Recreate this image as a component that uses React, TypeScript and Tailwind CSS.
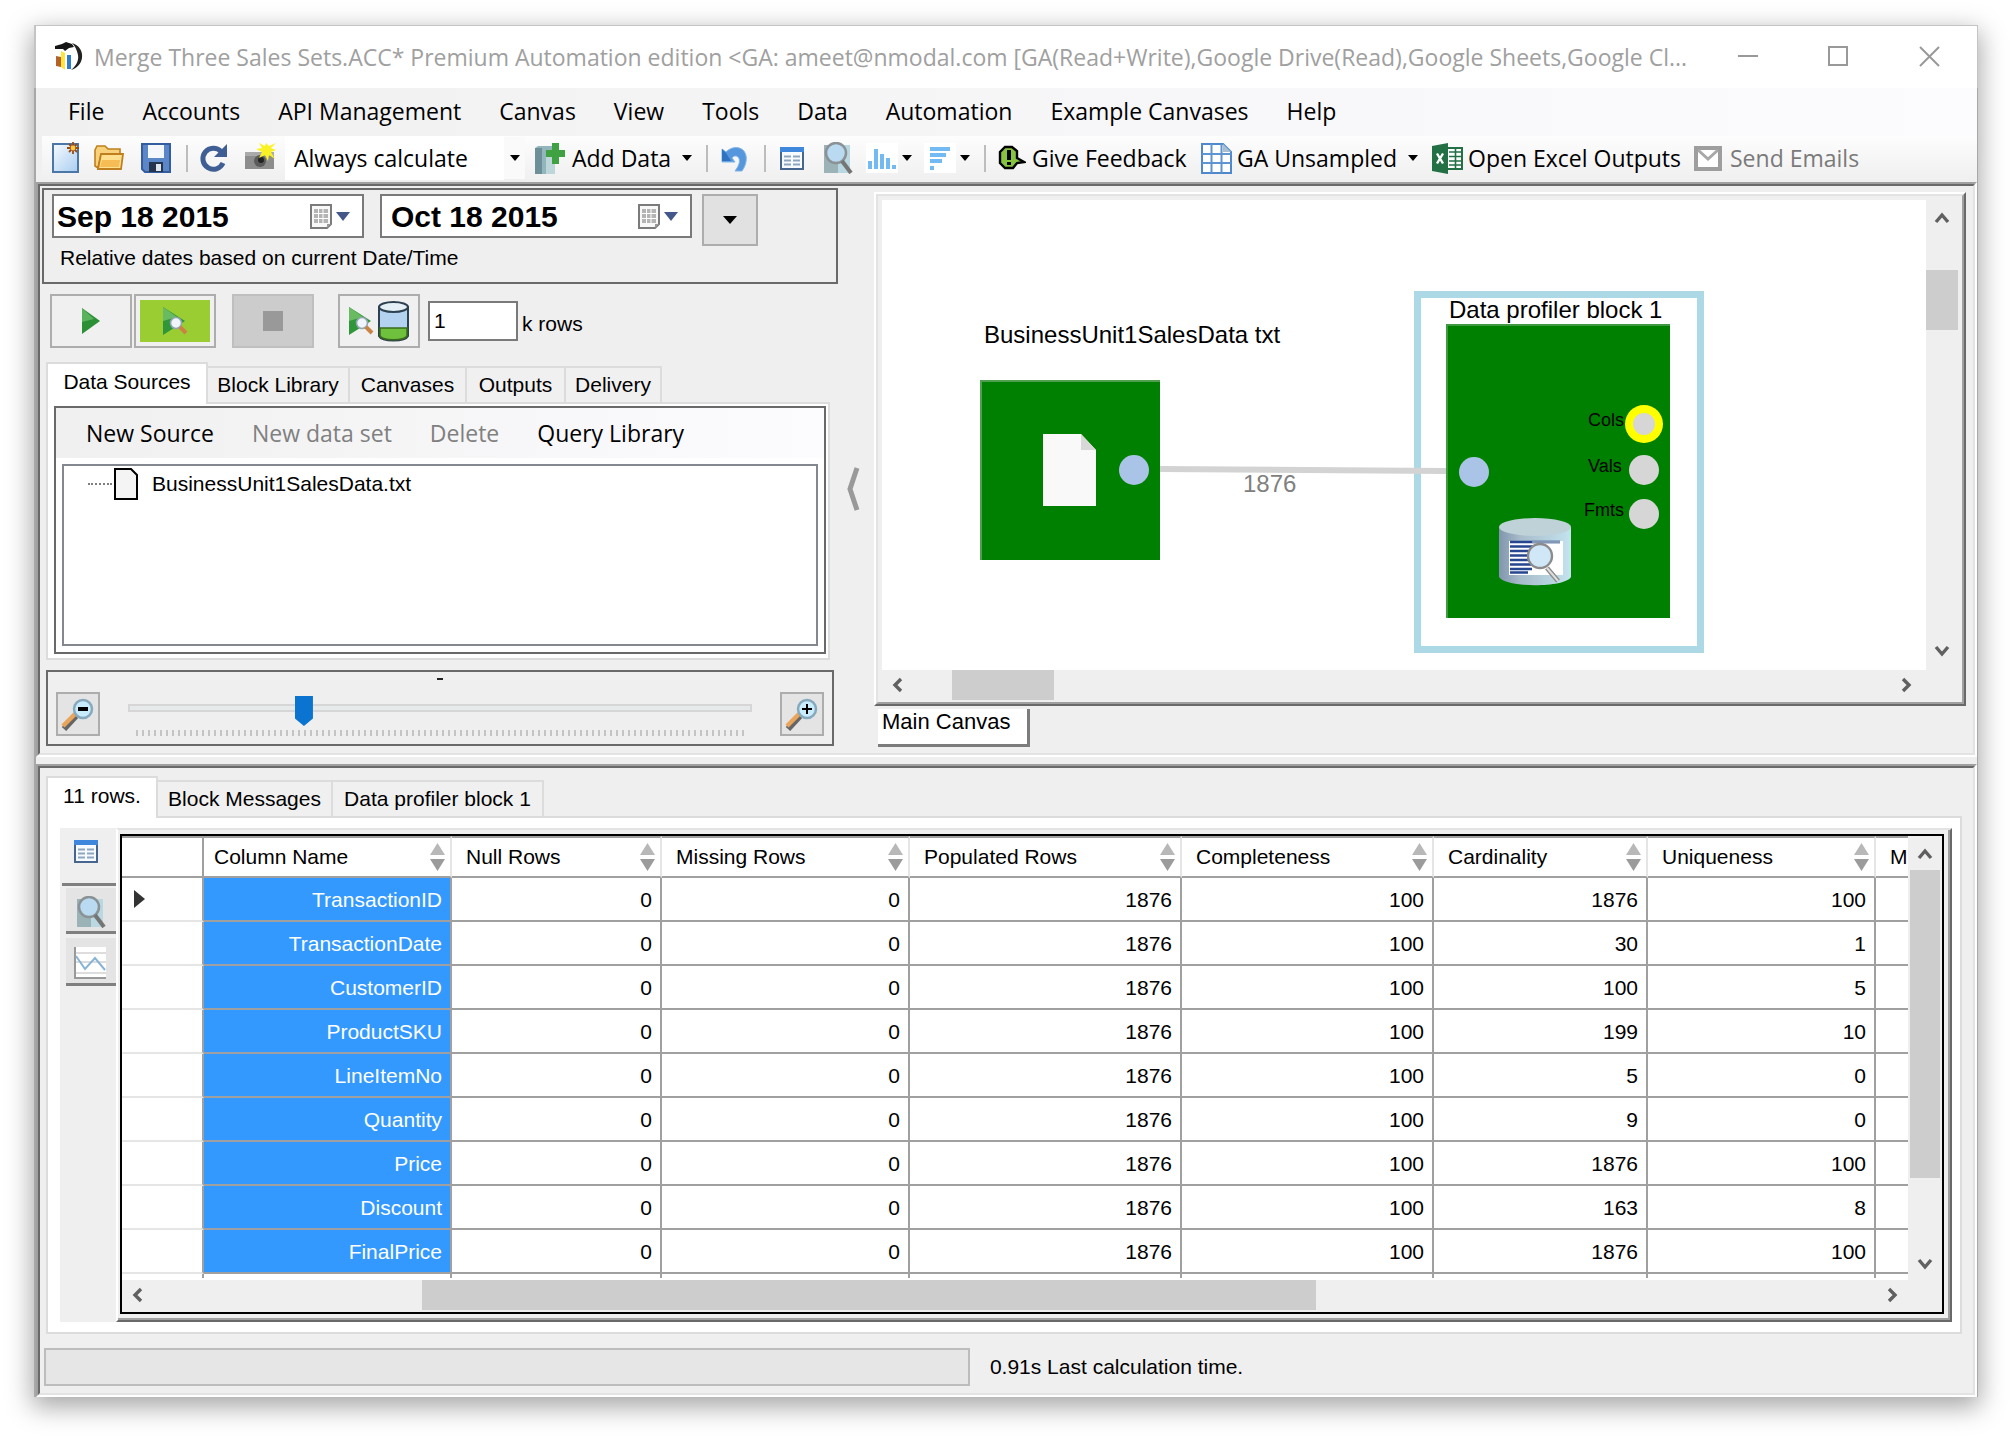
import React, { useState } from 'react';

const menuItems = ['File', 'Accounts', 'API Management', 'Canvas', 'View', 'Tools', 'Data', 'Automation', 'Example Canvases', 'Help'];

const columns = [
  { name: 'Null Rows', width: 'w-[210px]' },
  { name: 'Missing Rows', width: 'w-[248px]' },
  { name: 'Populated Rows', width: 'w-[272px]' },
  { name: 'Completeness', width: 'w-[252px]' },
  { name: 'Cardinality', width: 'w-[214px]' },
  { name: 'Uniqueness', width: 'w-[228px]' },
];

const rows = [
  ['TransactionID', 0, 0, 1876, 100, 1876, 100],
  ['TransactionDate', 0, 0, 1876, 100, 30, 1],
  ['CustomerID', 0, 0, 1876, 100, 100, 5],
  ['ProductSKU', 0, 0, 1876, 100, 199, 10],
  ['LineItemNo', 0, 0, 1876, 100, 5, 0],
  ['Quantity', 0, 0, 1876, 100, 9, 0],
  ['Price', 0, 0, 1876, 100, 1876, 100],
  ['Discount', 0, 0, 1876, 100, 163, 8],
  ['FinalPrice', 0, 0, 1876, 100, 1876, 100],
];

const Caret = ({ className = '', fill = '#000' }) => (
  <svg className={`shrink-0 ${className}`} width="10" height="6" viewBox="0 0 10 6">
    <path d="M0 0h10L5 6z" fill={fill} />
  </svg>
);

const Separator = ({ className = '' }) => <div className={`h-[27px] w-[2px] shrink-0 bg-[#bdbdbd] ${className}`} />;

const Chevron = ({ d }) => (
  <svg width="16" height="16" viewBox="0 0 16 16" fill="none" stroke="#606060" strokeWidth="3.4">
    <path d={d} />
  </svg>
);
const UP = 'M2 12L8 5l6 7';
const DOWN = 'M2 4l6 7 6-7';
const LEFT = 'M11 2L5 8l6 6';
const RIGHT = 'M5 2l6 6-6 6';

const LogoIcon = () => (
  <svg width="32" height="30" viewBox="0 0 32 30">
    <path d="M2 4l7-2 4-2 6 2 2 3-5 1-4 3-2-2-8 0z" fill="#151515" />
    <path d="M19 1c7 2 11 8 10 15-1 6-5 10-11 12 5-4 8-9 7-15-1-5-3-9-6-12z" fill="#222" />
    <path d="M3 14l5 1v10l-5-1z" fill="#b5622a" />
    <path d="M8 9l4 2v17l-4-3z" fill="#ffe53b" />
    <path d="M14 13h4v14h-4z" fill="#2e7bc8" />
    <path d="M12 11h2v18h-2z" fill="#fff" />
  </svg>
);

const NewIcon = () => (
  <svg width="28" height="32" viewBox="0 0 28 32">
    <defs>
      <linearGradient id="newPage" x1="0" y1="0" x2="1" y2="1">
        <stop offset="0" stopColor="#f6fbff" />
        <stop offset="1" stopColor="#a9cdf0" />
      </linearGradient>
    </defs>
    <path d="M1 2h25v28H1z" fill="url(#newPage)" stroke="#4a76a8" strokeWidth="2" />
    <path d="M21 0v12M15 6h12M17 2l8 8M25 2l-8 8" stroke="#9a4a12" strokeWidth="1.8" />
    <circle cx="21" cy="6" r="2.4" fill="#ffc93d" />
  </svg>
);

const FolderIcon = () => (
  <svg width="32" height="28" viewBox="0 0 32 28">
    <path d="M2 6l2-4h8l3 3h12v6H8L5 24 2 22z" fill="#f8d27a" stroke="#bf7f1f" strokeWidth="1.6" />
    <path d="M8 10h22l-2 15H5z" fill="#ffe08f" stroke="#bf7f1f" strokeWidth="1.8" />
    <path d="M9 16h18l-1 7H7z" fill="#f6bd55" />
  </svg>
);

const SaveIcon = () => (
  <svg width="30" height="30" viewBox="0 0 30 30">
    <path d="M1 1h28v28H4l-3-3z" fill="#5b87c8" stroke="#345da0" strokeWidth="2" />
    <path d="M7 2h16v13H7z" fill="#f4f8fd" />
    <path d="M8 19h14v10H8z" fill="#26344d" />
    <path d="M15 21h5v7h-5z" fill="#dfe6ee" />
  </svg>
);

const RefreshIcon = () => (
  <svg width="30" height="30" viewBox="0 0 30 30">
    <path d="M23 8.500A10.500 10.500 0 1 0 25 20" fill="none" stroke="#3f5f94" strokeWidth="5" />
    <path d="M29 1v13H16z" fill="#3f5f94" />
  </svg>
);

const CameraIcon = () => (
  <svg width="31" height="30" viewBox="0 0 31 30">
    <path d="M0 9h29v17H0z" fill="#8d8d8d" />
    <path d="M0 9h29v4H0z" fill="#aaa" />
    <circle cx="15" cy="18" r="6" fill="#5b5b5b" />
    <circle cx="16" cy="17" r="3" fill="#222" />
    <path d="M31 0l-5 5 5 2-5 2 4 7-6-4-1 6-3-6-6 3 3-6-6-3 6-1-3-5 6 3 1-3 3 3z" fill="#fbf225" />
  </svg>
);

const AddDataIcon = () => (
  <svg width="30" height="31" viewBox="0 0 30 31">
    <path d="M0 5l3-2h17v28H0z" fill="#93b6bd" />
    <path d="M0 5h7v26H0z" fill="#6d8f98" />
    <path d="M11 7h9v24h-9z" fill="#bcd6da" />
    <path d="M17 0h7v7h6v7h-6v7h-7v-7h-6V7h6z" fill="#3fa142" />
  </svg>
);

const UndoIcon = () => (
  <svg width="27" height="28" viewBox="0 0 27 28">
    <path d="M1 5l4 3c5-5 12-6 17-2 5 5 4 14-1 21h-7c4-5 6-11 3-14-2-2-5-1-6 1l3 4H1z" fill="#5596dc" stroke="#7fb4e8" strokeWidth="1" />
    <path d="M1 5l4 4 5 8H1z" fill="#2f72c0" />
  </svg>
);

const GridIcon = () => (
  <svg width="24" height="23" viewBox="0 0 24 23">
    <path d="M1 1h22v21H1z" fill="#f7fbff" stroke="#46658f" strokeWidth="2" />
    <path d="M0 0h24v5H0z" fill="#3f86dd" />
    <path d="M4 9.500h7M13 9.500h7M4 13.500h7M13 13.500h7M4 17.500h7M13 17.500h7" stroke="#8fa6c2" strokeWidth="2" />
  </svg>
);

const SearchDataIcon = () => (
  <svg width="30" height="32" viewBox="0 0 30 32">
    <path d="M1 3h26v28H1z" fill="#9bb2b6" />
    <path d="M15 3h12v28H15z" fill="#b9d8e2" />
    <circle cx="13" cy="11" r="10" fill="#b9daf0" stroke="#8a9296" strokeWidth="2.500" />
    <path d="M19 19l9 12" stroke="#757575" strokeWidth="4" />
  </svg>
);

const BarsIcon = () => (
  <svg width="32" height="30" viewBox="0 0 32 30" className="bg-white">
    <path d="M4 26v-8M10 26V6M16 26V11M22 26V15M28 26v-4" stroke="#74baf2" strokeWidth="4" />
  </svg>
);

const HBarsIcon = () => (
  <svg width="32" height="30" viewBox="0 0 32 30" className="bg-white">
    <path d="M6 6h20M6 12h16M6 18h12M6 25h4" stroke="#74baf2" strokeWidth="4" />
  </svg>
);

const FeedbackIcon = () => (
  <svg width="28" height="26" viewBox="0 0 28 26">
    <path d="M7 2h7l5 4v7l7 4-7 1-4 5H7l-5-5V7z" fill="#86c440" stroke="#000" strokeWidth="2.400" />
    <path d="M9 5h4v10H9zM9 17h4v3H9z" fill="#000" />
  </svg>
);

const SheetIcon = () => (
  <svg width="31" height="31" viewBox="0 0 31 31">
    <path d="M1 1h21l8 8v21H1z" fill="#fff" stroke="#4f88cc" strokeWidth="2" />
    <path d="M1 11h29M1 20h29M10.500 1v29M20.500 1v29" stroke="#5f94d2" strokeWidth="2" />
    <path d="M22 1l8 8h-8z" fill="#a9bfd0" />
  </svg>
);

const ExcelIcon = () => (
  <svg width="31" height="31" viewBox="0 0 31 31">
    <path d="M15 5h15v21H15z" fill="#fff" stroke="#237044" strokeWidth="2" />
    <path d="M17 9h12M17 13.500h12M17 18h12M17 22h12M23.500 5v21" stroke="#237044" strokeWidth="1.600" />
    <path d="M0 3l16-3v31L0 28z" fill="#237044" />
    <path d="M5 10.500l6 10M11 10.500l-6 10" stroke="#fff" strokeWidth="2.400" />
  </svg>
);

const MailIcon = () => (
  <svg width="28" height="25" viewBox="0 0 28 25">
    <path d="M2 2h24v21H2z" fill="#fff" stroke="#9e9e9e" strokeWidth="4" />
    <path d="M4 4l10 9L24 4" fill="none" stroke="#a8a8a8" strokeWidth="3" />
  </svg>
);

const CalendarIcon = () => (
  <svg width="22" height="25" viewBox="0 0 22 25">
    <path d="M1 1h20v19l-4 4H1z" fill="#f8f8f8" stroke="#7b7b7b" strokeWidth="2" />
    <path d="M4 5h14v14H4z" fill="#b4b4b4" />
    <path d="M4 9.500h14M4 14.500h14M8.500 5v14M13 5v14" stroke="#fff" strokeWidth="1" />
    <path d="M17 24v-4h4z" fill="#999" />
  </svg>
);

const PlayIcon = () => (
  <svg width="18" height="28" viewBox="0 0 18 28">
    <path d="M0 1l18 13L0 27z" fill="#2a8f35" />
    <path d="M0 1l12 11-12 3z" fill="#58b35c" />
  </svg>
);

const PlayProfileIcon = () => (
  <svg width="25" height="28" viewBox="0 0 25 28">
    <path d="M0 0l22 14L0 28z" fill="#2f9639" />
    <path d="M0 0l14 10L0 14z" fill="#69bb62" />
    <circle cx="13" cy="16" r="5.500" fill="#eef5fb" stroke="#92a4ae" strokeWidth="1.600" />
    <path d="M17 20l6 6" stroke="#c98445" strokeWidth="4" />
  </svg>
);

const CylinderIcon = () => (
  <svg width="31" height="41" viewBox="0 0 31 41">
    <path d="M1 6v29c3 6 26 6 29 0V6z" fill="#b3d2ef" stroke="#2d4150" strokeWidth="2" />
    <path d="M2 27h27v8c-3 5-24 5-27 0z" fill="#6fc03c" stroke="#3a6b1d" strokeWidth="1.500" />
    <ellipse cx="15.500" cy="6" rx="14.500" ry="5" fill="#e4f0f5" stroke="#2d4150" strokeWidth="2" />
  </svg>
);

const ZoomGlyph = ({ plus = false }) => (
  <svg width="34" height="34" viewBox="0 0 34 34">
    <path d="M3 32l12-13" stroke="#666" strokeWidth="6" />
    <path d="M2 29l12-12" stroke="#e9a55b" strokeWidth="4.500" />
    <circle cx="22" cy="12" r="9" fill="#c8ecfb" stroke="#86a9bd" strokeWidth="2.500" />
    <path d={plus ? 'M17 12h10M22 7v10' : 'M17 12h10'} stroke="#000" strokeWidth={plus ? 2 : 4} />
  </svg>
);

const DatabaseIcon = () => (
  <svg width="72" height="68" viewBox="0 0 72 68">
    <defs>
      <linearGradient id="drum">
        <stop offset="0" stopColor="#8196ad" />
        <stop offset="0.300" stopColor="#a8bccb" />
        <stop offset="1" stopColor="#c3e3ee" />
      </linearGradient>
    </defs>
    <path d="M0 9v50c6 11 66 11 72 0V9z" fill="url(#drum)" />
    <ellipse cx="36" cy="9" rx="36" ry="9" fill="#bfd2d8" />
    <path d="M10 23h54v34H10z" fill="#fff" />
    <path d="M11 24h50M11 28.500h34M11 33h30M11 37.500h28M11 42h28M11 46.500h26M11 51h22M11 54.500h18" stroke="#26468f" strokeWidth="2.400" />
    <path d="M33 24h28" stroke="#8296b6" strokeWidth="2.400" />
    <circle cx="41" cy="38" r="12" fill="#cfe7f7" stroke="#8b8b8b" strokeWidth="2.400" />
    <path d="M48 50l11 13" stroke="#8b8b8b" strokeWidth="5" />
    <path d="M48 50l11 13" stroke="#ddd" strokeWidth="2" />
  </svg>
);

const ChartIcon = () => (
  <svg width="32" height="32" viewBox="0 0 32 32">
    <path d="M0 0h32v32H0z" fill="#fff" />
    <path d="M1 6h31M1 15h31M1 26h31" stroke="#ddd" strokeWidth="2" />
    <path d="M1 0v31h31" fill="none" stroke="#999" strokeWidth="2" />
    <path d="M2 9l9 13 10-11 10 12" fill="none" stroke="#86b3d6" strokeWidth="2" />
  </svg>
);

const SortIcon = () => (
  <svg width="15" height="28" viewBox="0 0 15 28">
    <path d="M7.500 0L15 12H0z" fill="#b8b8b8" />
    <path d="M0 16h15L7.500 28z" fill="#9b9b9b" />
  </svg>
);

const TitleBar = () => (
  <header className="flex h-[63px] items-center border-t border-l-2 border-r border-[#c4c4c4] bg-white pl-[17px]">
    <LogoIcon />
    <h1 className="ml-[9px] min-w-0 flex-1 truncate text-[23px] text-[#a0a0a0]">
      Merge Three Sales Sets.ACC* Premium Automation edition &lt;GA: ameet@nmodal.com [GA(Read+Write),Google Drive(Read),Google Sheets,Google Cl...
    </h1>
    <div className="flex h-full pr-[2px] pb-[2px]">
      <button aria-label="Minimize" className="flex w-[90px] items-center justify-center">
        <span className="h-[2px] w-5 bg-[#999]" />
      </button>
      <button aria-label="Maximize" className="flex w-[90px] items-center justify-center">
        <span className="size-5 border-2 border-[#999]" />
      </button>
      <button aria-label="Close" className="flex w-[92px] items-center justify-center">
        <svg width="21" height="21" viewBox="0 0 21 21" stroke="#999" strokeWidth="2">
          <path d="M1 1l19 19M20 1L1 20" />
        </svg>
      </button>
    </div>
  </header>
);

const Toolbar = () => (
  <div className="ml-[6px] flex h-[46px] items-center bg-gradient-to-b from-[#fdfdfd] to-[#efefef] pb-[2px] pl-[10px] text-[23px] whitespace-nowrap">
    <button aria-label="New"><NewIcon /></button>
    <button aria-label="Open" className="ml-[13px]"><FolderIcon /></button>
    <button aria-label="Save" className="ml-4"><SaveIcon /></button>
    <Separator className="ml-[15px]" />
    <button aria-label="Refresh" className="ml-[10px]"><RefreshIcon /></button>
    <button aria-label="Snapshot" className="ml-[17px]"><CameraIcon /></button>
    <select aria-label="Calculation mode" className="ml-[9px] h-11 w-[219px] shrink-0 appearance-none bg-white pl-[9px]">
      <option>Always calculate</option>
    </select>
    <span className="flex h-[42px] w-[21px] shrink-0 items-center justify-center bg-[#fafafa]"><Caret /></span>
    <button className="ml-[10px] flex items-center">
      <AddDataIcon />
      <span className="ml-[7px] w-[98px] text-left">Add Data</span>
      <Caret className="ml-3" />
    </button>
    <Separator className="ml-[14px]" />
    <button aria-label="Undo" className="ml-[13px]"><UndoIcon /></button>
    <Separator className="ml-4" />
    <button aria-label="Table view" className="ml-[14px]"><GridIcon /></button>
    <button aria-label="Inspect data" className="ml-[19px]"><SearchDataIcon /></button>
    <button aria-label="Column chart" className="ml-[13px] flex items-center gap-1"><BarsIcon /><Caret /></button>
    <button aria-label="Bar chart" className="ml-3 flex items-center gap-1"><HBarsIcon /><Caret /></button>
    <Separator className="ml-[14px]" />
    <button className="ml-3 flex items-center">
      <FeedbackIcon />
      <span className="ml-[6px] w-[152px] text-left">Give Feedback</span>
    </button>
    <button className="ml-[17px] flex items-center">
      <SheetIcon />
      <span className="ml-[5px] w-[159px] text-left">GA Unsampled</span>
      <Caret className="ml-3" />
    </button>
    <button className="ml-[14px] flex items-center">
      <ExcelIcon />
      <span className="ml-[5px] w-[208px] text-left">Open Excel Outputs</span>
    </button>
    <button className="ml-[18px] flex items-center text-[#7a7a7a]">
      <MailIcon />
      <span className="ml-2">Send Emails</span>
    </button>
  </div>
);

const DateField = ({ label, value, className }) => {
  const [date, setDate] = useState(value);
  return (
    <div className="flex h-11 w-[312px] items-center border-2 border-[#7a7a7a] bg-white pr-3">
      <input
        aria-label={label}
        value={date}
        onChange={(e) => setDate(e.target.value)}
        className={`min-w-0 flex-1 bg-transparent text-[30px] font-bold outline-none ${className}`}
      />
      <button aria-label={`Pick ${label}`} className="flex items-center gap-1">
        <CalendarIcon />
        <svg width="14" height="9" viewBox="0 0 14 9"><path d="M0 0h14L7 9z" fill="#43578a" /></svg>
      </button>
    </div>
  );
};

const DateRange = () => (
  <div className="h-24 border-2 border-[#696969] pt-1 pl-2">
    <div className="flex items-start">
      <DateField label="start date" value="Sep 18 2015" className="pl-[3px]" />
      <div className="w-4" />
      <DateField label="end date" value="Oct 18 2015" className="pl-[9px]" />
      <button aria-label="Date presets" className="ml-[10px] flex h-[52px] w-14 items-center justify-center border-2 border-[#adadad] bg-[#e1e1e1]">
        <svg width="14" height="8" viewBox="0 0 14 8"><path d="M0 0h14L7 8z" /></svg>
      </button>
    </div>
    <p className="pl-2 leading-6">Relative dates based on current Date/Time</p>
  </div>
);

const RunControls = () => {
  const [limit, setLimit] = useState('1');
  return (
    <div className="mt-[10px] flex items-center pl-2">
      <button aria-label="Run" className="flex h-[54px] w-[82px] items-center justify-center border-2 border-[#adadad] bg-[#f0f0f0]"><PlayIcon /></button>
      <button aria-label="Run and profile" className="ml-[2px] flex h-[54px] w-[82px] items-center justify-center border-2 border-[#adadad] bg-[#f0f0f0] p-1">
        <span className="flex h-[42px] w-full items-center justify-center bg-[#9acd32]"><PlayProfileIcon /></span>
      </button>
      <button aria-label="Stop" className="ml-4 flex h-[54px] w-[82px] items-center justify-center border-2 border-[#bfbfbf] bg-[#ccc]">
        <span className="size-5 bg-[#999]" />
      </button>
      <button aria-label="Profile sample" className="ml-6 flex h-[54px] w-[82px] items-center justify-center gap-1 border-2 border-[#adadad] bg-[#f0f0f0]">
        <PlayProfileIcon />
        <CylinderIcon />
      </button>
      <input
        id="row-limit"
        value={limit}
        onChange={(e) => setLimit(e.target.value)}
        className="ml-2 h-10 w-[90px] border-2 border-[#7a7a7a] bg-white pl-1 outline-none"
      />
      <label htmlFor="row-limit" className="ml-1 pt-[6px]">k rows</label>
    </div>
  );
};

const Tab = ({ active = false, className = '', children }) => (
  <button
    role="tab"
    aria-selected={active}
    className={
      active
        ? `relative -mb-[2px] h-[42px] border-2 border-b-0 border-[#dcdcdc] bg-white pb-1 text-center whitespace-nowrap ${className}`
        : `h-9 border-t-2 border-r-2 border-[#dcdcdc] bg-[#f0f0f0] text-center whitespace-nowrap ${className}`
    }
  >
    {children}
  </button>
);

const SourcesPanel = () => (
  <div className="mt-[14px] ml-1 w-[784px]">
    <div role="tablist" className="flex h-10 items-end">
      <Tab active className="w-[162px]">Data Sources</Tab>
      <Tab className="w-[142px]">Block Library</Tab>
      <Tab className="w-[117px]">Canvases</Tab>
      <Tab className="w-[99px]">Outputs</Tab>
      <Tab className="w-[96px]">Delivery</Tab>
    </div>
    <div className="border-2 border-[#dcdcdc] bg-white pt-[2px] pr-[2px] pb-1 pl-[6px]">
      <div className="border-2 border-[#696969]">
        <div className="flex h-[50px] items-center gap-[38px] bg-gradient-to-r from-[#f0f0f0] to-[#fcfcff] pl-[30px] font-['Open_Sans',sans-serif] text-[23px]">
          <button>New Source</button>
          <button className="text-[#808080]">New data set</button>
          <button className="text-[#808080]">Delete</button>
          <button>Query Library</button>
        </div>
        <div className="mx-[6px] mt-[6px] mb-[6px] h-[182px] border-2 border-[#828790] bg-white">
          <div className="flex h-9 items-center pl-6">
            <span className="w-[24px] border-t-2 border-dotted border-[#808080]" />
            <svg className="ml-[2px]" width="24" height="32" viewBox="0 0 24 32">
              <path d="M1 1h16l6 6v24H1z" fill="#f4f4f4" stroke="#000" strokeWidth="2" />
            </svg>
            <span className="ml-[14px]">BusinessUnit1SalesData.txt</span>
          </div>
        </div>
      </div>
    </div>
  </div>
);

const ZoomPanel = () => {
  const [zoom, setZoom] = useState(274);
  return (
    <div className="mt-[10px] ml-1 flex h-[76px] w-[788px] border-2 border-[#696969] px-2">
      <button aria-label="Zoom out" onClick={() => setZoom(zoom - 50)} className="mt-5 flex h-11 w-11 items-center justify-center border-2 border-[#adadad] bg-[#e4e4e4]">
        <ZoomGlyph />
      </button>
      <div className="flex flex-1 flex-col px-7">
        <div className="mt-[6px] h-[2px] w-[6px] self-center bg-[#222]" />
        <input
          type="range"
          aria-label="Zoom"
          min="0"
          max="1000"
          value={zoom}
          onChange={(e) => setZoom(Number(e.target.value))}
          className="mt-[13px] h-[30px] w-full appearance-none bg-transparent [&::-webkit-slider-runnable-track]:h-2 [&::-webkit-slider-runnable-track]:border-2 [&::-webkit-slider-runnable-track]:border-[#d6d6d6] [&::-webkit-slider-runnable-track]:bg-[#e7eaea] [&::-webkit-slider-thumb]:-mt-[10px] [&::-webkit-slider-thumb]:h-[30px] [&::-webkit-slider-thumb]:w-[18px] [&::-webkit-slider-thumb]:appearance-none [&::-webkit-slider-thumb]:bg-[#0b74d1] [&::-webkit-slider-thumb]:[clip-path:polygon(0_0,100%_0,100%_75%,50%_100%,0_75%)]"
        />
        <div className="mx-2 mt-[7px] h-[6px] bg-[repeating-linear-gradient(90deg,#c4c4c4_0_2px,transparent_2px_6px)]" />
      </div>
      <button aria-label="Zoom in" onClick={() => setZoom(zoom + 50)} className="mt-5 flex h-11 w-11 items-center justify-center border-2 border-[#adadad] bg-[#e4e4e4]">
        <ZoomGlyph plus />
      </button>
    </div>
  );
};

const Canvas = () => (
  <div className="relative h-[470px] min-w-0 flex-1 overflow-hidden bg-white text-[24px]">
    <div className="absolute top-[91px] left-[532px] h-[362px] w-[290px] border-[7px] border-[#add8e6]" />
    <div className="absolute top-[123px] left-[102px] leading-6 whitespace-nowrap">BusinessUnit1SalesData txt</div>
    <div className="absolute top-[180px] left-[98px] size-[180px] border-t-2 border-l-2 border-[#4f9f4f] bg-[#008000]" />
    <div className="absolute top-[124px] left-[564px] h-[294px] w-[224px] border-t-2 border-l-2 border-[#3f993f] bg-[#008000]" />
    <svg className="absolute top-0 left-0" width="830" height="470" viewBox="0 0 830 470">
      <path d="M278 269L564 271" stroke="#d3d3d3" strokeWidth="6" />
      <path d="M161 234h38l15 16v56h-53z" fill="#f9f9f9" />
      <path d="M199 234v16h15z" fill="#d8d8d8" />
      <circle cx="252" cy="270" r="15" fill="#a9c4e6" />
      <circle cx="592" cy="272" r="15" fill="#a9c4e6" />
      <circle cx="762" cy="224" r="19" fill="#ff0" />
      <circle cx="762" cy="224" r="11" fill="#d6d6d6" />
      <circle cx="762" cy="270" r="15" fill="#d6d6d6" />
      <circle cx="762" cy="314" r="15" fill="#d6d6d6" />
    </svg>
    <div className="absolute top-[272px] left-[361px] leading-6 text-[#808080]">1876</div>
    <div className="absolute top-[98px] left-[567px] leading-6 whitespace-nowrap">Data profiler block 1</div>
    <div className="absolute top-[208px] left-[706px] text-[18px] leading-6">Cols</div>
    <div className="absolute top-[254px] left-[706px] text-[18px] leading-6">Vals</div>
    <div className="absolute top-[298px] left-[702px] text-[18px] leading-6">Fmts</div>
    <div className="absolute top-[318px] left-[617px]"><DatabaseIcon /></div>
  </div>
);

const CanvasPanel = () => (
  <div className="min-w-0 flex-1 pt-[6px]">
    <div className="border-2 border-t-white border-r-[#696969] border-b-[#696969] border-l-white">
      <div className="border-2 border-t-[#e3e3e3] border-r-[#a0a0a0] border-b-[#a0a0a0] border-l-[#e3e3e3] pt-1 pr-1 pb-[2px] pl-1">
        <div className="flex">
          <Canvas />
          <div className="flex w-8 flex-col items-center justify-between pt-[10px] pb-[11px]">
            <Chevron d={UP} />
            <div className="mt-11 mb-auto h-[60px] w-8 bg-[#cdcdcd]" />
            <Chevron d={DOWN} />
          </div>
        </div>
        <div className="flex h-[30px] items-center pr-11 pl-2">
          <Chevron d={LEFT} />
          <div className="mr-auto ml-[46px] h-[30px] w-[102px] bg-[#cdcdcd]" />
          <Chevron d={RIGHT} />
        </div>
      </div>
    </div>
    <button className="ml-1 h-[38px] w-[152px] border-r-[3px] border-b-[3px] border-[#7c7c7c] bg-white pb-2 pl-1 text-left text-[22px] leading-6">Main Canvas</button>
  </div>
);

const ProfileTable = () => (
  <table className="w-full table-fixed border-separate border-spacing-0">
    <thead>
      <tr className="h-[42px] text-left">
        <th className="w-[82px] border-t-2 border-r-2 border-b-2 border-[#a0a0a0]" />
        <th className="w-[248px] border-t-2 border-r-2 border-b-2 border-[#a0a0a0] border-r-[#e5e5e5] p-0 pr-[5px] pl-[10px] font-normal">
          <div className="flex items-center justify-between">Column Name<SortIcon /></div>
        </th>
        {columns.map((col) => (
          <th key={col.name} className={`${col.width} border-t-2 border-r-2 border-b-2 border-[#a0a0a0] border-r-[#e5e5e5] p-0 pr-[5px] pl-[14px] font-normal`}>
            <div className="flex items-center justify-between">{col.name}<SortIcon /></div>
          </th>
        ))}
        <th className="overflow-hidden border-t-2 border-b-2 border-[#a0a0a0] p-0 pl-[14px] font-normal">M</th>
      </tr>
    </thead>
    <tbody>
      {rows.map((row, i) => (
        <tr key={row[0]} className="h-11">
          <td className="border-r-2 border-b-2 border-[#a0a0a0] border-b-[#e5e5e5] p-0 pl-3">
            {i === 0 && <svg width="11" height="18" viewBox="0 0 11 18"><path d="M0 0l11 9-11 9z" fill="#333" /></svg>}
          </td>
          {row.map((value, j) => (
            <td
              key={j}
              className={`border-r-2 border-b-2 border-[#a0a0a0] p-0 pt-[2px] pr-2 text-right ${j === 0 ? 'bg-[#3399ff] text-white' : ''}`}
            >
              {value}
            </td>
          ))}
          <td className="border-b-2 border-[#a0a0a0]" />
        </tr>
      ))}
      <tr className="h-11">
        {[0, 1, 2, 3, 4, 5, 6, 7].map((n) => <td key={n} className="border-r-2 border-[#a0a0a0]" />)}
        <td />
      </tr>
    </tbody>
  </table>
);

const ResultsPanel = () => (
  <div className="mr-[11px] ml-[6px] pt-[6px]">
    <div role="tablist" className="flex h-[42px] items-end">
      <Tab active className="w-[112px]">11 rows.</Tab>
      <Tab className="w-[175px]">Block Messages</Tab>
      <Tab className="w-[211px]">Data profiler block 1</Tab>
    </div>
    <div className="flex border-2 border-[#dcdcdc] bg-white py-[10px] pr-2 pl-3">
      <div className="w-14 shrink-0 bg-[#efefef]">
        <button aria-label="Table" className="ml-[2px] flex h-[58px] w-[54px] items-center border-b-[3px] border-[#808080] pb-2 pl-3"><GridIcon /></button>
        <button aria-label="Inspect" className="mt-[2px] ml-[6px] flex h-[46px] w-[50px] items-center border-b-[3px] border-[#808080] bg-[#e4e4e4] pt-1 pl-[10px]"><SearchDataIcon /></button>
        <button aria-label="Chart" className="mt-1 ml-[6px] flex h-12 w-[50px] items-center border-b-[3px] border-[#808080] bg-[#e4e4e4] pt-1 pl-2"><ChartIcon /></button>
      </div>
      <div className="min-w-0 flex-1 border-2 border-t-[#e3e3e3] border-r-[#696969] border-b-[#696969] border-l-white">
        <div className="border-r-2 border-b-2 border-[#a0a0a0] bg-[#efefef] pt-1 pr-1 pb-1 pl-[2px]">
          <div className="border-2 border-black">
            <div className="flex h-[444px]">
              <div className="min-w-0 flex-1 border-b-2 border-white bg-white">
                <div className="h-[442px] overflow-hidden">
                  <ProfileTable />
                </div>
              </div>
              <div className="flex w-[34px] flex-col items-center pt-[10px] pb-2">
                <Chevron d={UP} />
                <div className="mt-2 mb-auto h-[308px] w-[30px] bg-[#cdcdcd]" />
                <Chevron d={DOWN} />
              </div>
            </div>
            <div className="flex h-8 items-start pr-[42px] pl-2">
              <span className="pt-[7px]"><Chevron d={LEFT} /></span>
              <div className="ml-[276px] h-[30px] w-[894px] bg-[#cdcdcd]" />
              <span className="ml-auto pt-[7px]"><Chevron d={RIGHT} /></span>
            </div>
          </div>
        </div>
      </div>
    </div>
  </div>
);

const Pane = ({ children }) => (
  <section className="border-2 border-t-[#a0a0a0] border-r-white border-b-white border-l-[#a0a0a0]">
    <div className="border-2 border-t-[#696969] border-r-[#e3e3e3] border-b-[#e3e3e3] border-l-[#696969]">{children}</div>
  </section>
);

const App = () => (
  <div className="bg-white px-[34px] pt-[25px] pb-[43px] font-['Liberation_Sans',Arial,sans-serif] text-[21px] text-black">
    <div className="shadow-[0_8px_24px_2px_rgba(0,0,0,0.35)]">
      <div className="font-['Open_Sans',sans-serif]">
        <TitleBar />
      </div>
      <main className="border-r border-l-2 border-[#a8a8a8] bg-[#efefef]">
        <div className="bg-gradient-to-r from-[#f0f0f0] to-[#fcfcff] font-['Open_Sans',sans-serif]">
          <nav className="flex h-12 items-center gap-[38px] pb-[2px] pl-8 text-[23px] whitespace-nowrap">
            {menuItems.map((item) => <button key={item}>{item}</button>)}
          </nav>
          <Toolbar />
        </div>
        <Pane>
          <div className="flex">
            <div className="ml-[2px] w-[796px] shrink-0 pt-[2px] pb-[7px]">
              <DateRange />
              <RunControls />
              <SourcesPanel />
              <ZoomPanel />
            </div>
            <button aria-label="Collapse panel" className="flex w-9 items-center justify-center pt-[38px] pr-[6px]">
              <svg width="14" height="44" viewBox="0 0 14 44" fill="none" stroke="#999" strokeWidth="5">
                <path d="M11 1L4 22l7 21" />
              </svg>
            </button>
            <CanvasPanel />
            <div className="w-[7px]" />
          </div>
        </Pane>
        <div className="h-[7px]" />
        <Pane>
          <ResultsPanel />
          <div className="mt-[14px] mb-[7px] ml-1 flex items-center">
            <div role="progressbar" aria-label="Calculation" className="h-[38px] w-[48%] border-2 border-[#bcbcbc] bg-[#e6e6e6]" />
            <span className="ml-5">0.91s Last calculation time.</span>
          </div>
        </Pane>
      </main>
    </div>
  </div>
);

export default App;
